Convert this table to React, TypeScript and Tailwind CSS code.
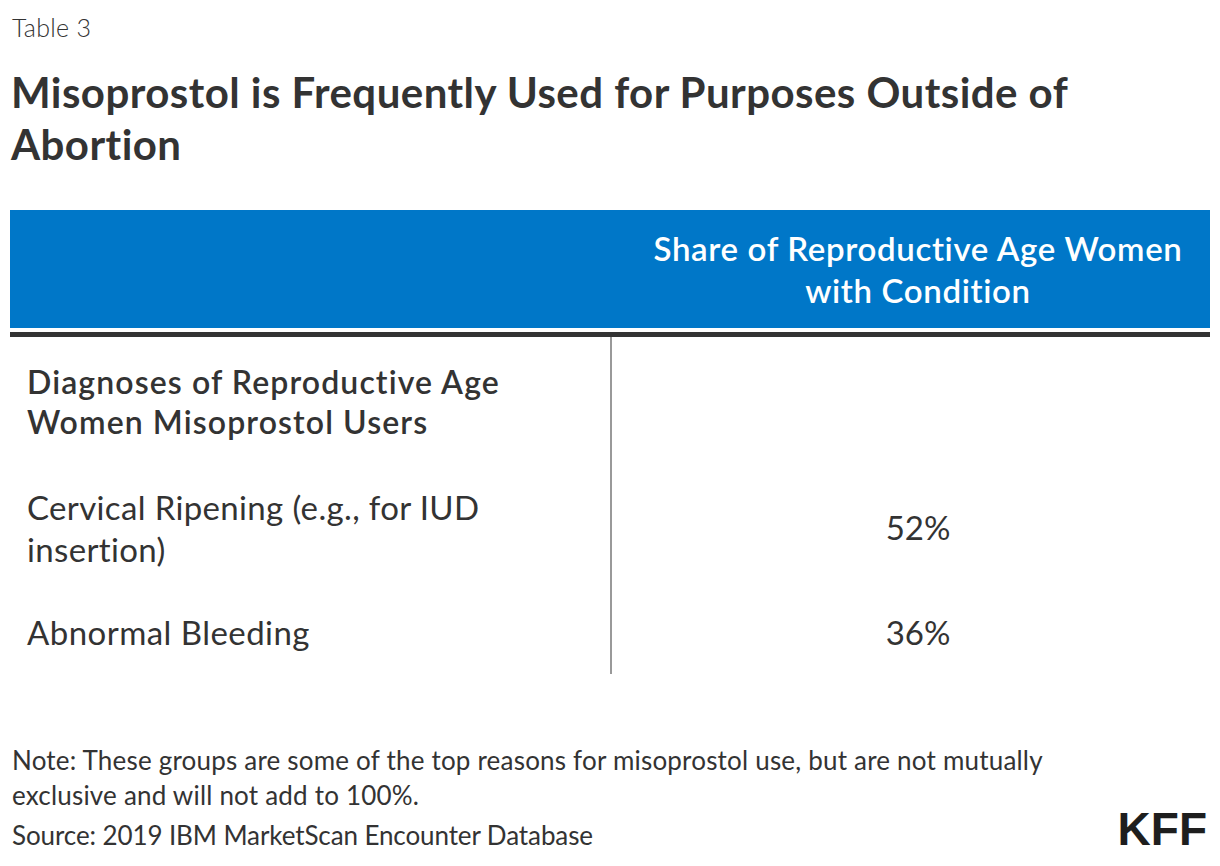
import React from "react";

export default function App() {
  return (
    <div className="w-[1220px] h-[866px] bg-white text-[#333] px-[10px] font-['Lato',sans-serif] overflow-hidden">
      <div className="pt-[12px] text-[25px] leading-[30px] font-light tracking-[0.3px] pl-[2px]">Table 3</div>
      <h1 className="mt-[24px] text-[42px] leading-[52px] font-bold tracking-[0.45px] pl-[1px]">
        Misoprostol is Frequently Used for Purposes Outside of
        <br />
        Abortion
      </h1>
      <div className="mt-[40px]">
        <div className="grid grid-cols-2 h-[118px] bg-[#0077c8]">
          <div />
          <div className="flex items-center justify-center text-center text-white text-[33px] leading-[42px] font-semibold tracking-[0.65px] pl-[16px]">
            <div>
              Share of Reproductive Age Women
              <br />
              with Condition
            </div>
          </div>
        </div>
        <div className="mt-[4px] h-[5px] bg-[#333]" />
        <div className="grid grid-cols-2">
          <div className="pl-[17px] pt-[25px] pb-[22px] text-[32px] leading-[40px] font-semibold tracking-[1.1px]">
            Diagnoses of Reproductive Age
            <br />
            Women Misoprostol Users
          </div>
          <div className="border-l-2 border-[#999]" />
          <div className="pl-[17px] pt-[22px] pb-[20px] text-[33px] leading-[42px] font-normal tracking-[0.35px]">
            Cervical Ripening (e.g., for IUD
            <br />
            insertion)
          </div>
          <div className="border-l-2 border-[#999] flex items-center justify-center text-[33px] leading-[42px] pl-[14px]">
            52%
          </div>
          <div className="pl-[17px] pt-[21px] pb-[21px] text-[33px] leading-[42px] font-normal tracking-[0.45px]">
            Abnormal Bleeding
          </div>
          <div className="border-l-2 border-[#999] flex items-center justify-center text-[33px] leading-[42px] pl-[14px]">
            36%
          </div>
        </div>
      </div>
      <div className="mt-[69px] pl-[2px] text-[26px] leading-[35px] font-normal tracking-[0.2px]">
        Note: These groups are some of the top reasons for misoprostol use, but are not mutually
        <br />
        exclusive and will not add to 100%.
      </div>
      <div className="mt-[5px] flex items-start justify-between pl-[2px]">
        <div className="text-[26px] leading-[35px] font-normal tracking-[-0.1px]">Source: 2019 IBM MarketScan Encounter Database</div>
        <div className="font-['Liberation_Sans',sans-serif] font-bold text-[46px] leading-[46px] text-[#1e1e1e] mr-[3px] mt-[-12px]">
          KFF
        </div>
      </div>
    </div>
  );
}
